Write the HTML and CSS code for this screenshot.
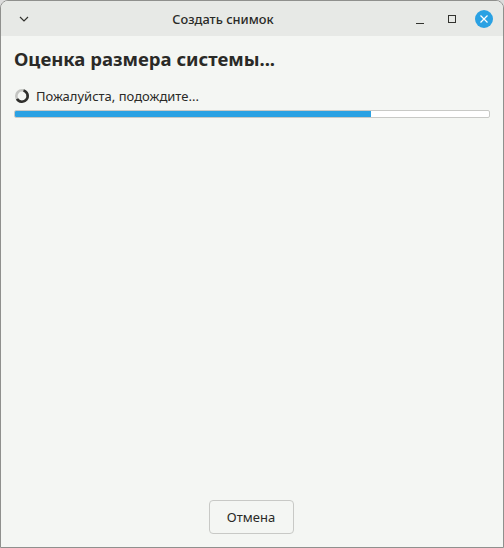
FILE: index.html
```html
<!DOCTYPE html>
<html lang="ru">
<head>
    <meta charset="UTF-8">
    <title>Создать снимок</title>
    <link rel="stylesheet" href="styles.css">
</head>
<body>
    <div class="window">
        <div class="titlebar">
            <button class="tb-btn menu-btn" type="button">
                <svg width="12" height="8" viewBox="0 0 12 8"><path d="M2 2 6 6l4-4" fill="none" stroke="#33332f" stroke-width="1.2"/></svg>
            </button>
            <div class="title">Создать снимок</div>
            <div class="win-controls">
                <button class="tb-btn" type="button">
                    <svg width="10" height="10" viewBox="0 0 10 10"><path d="M1 9.5h8" stroke="#33332f" stroke-width="1"/></svg>
                </button>
                <button class="tb-btn" type="button">
                    <svg width="10" height="10" viewBox="0 0 10 10"><rect x="1.5" y="1.5" width="7" height="7" fill="none" stroke="#33332f" stroke-width="1"/></svg>
                </button>
                <button class="tb-btn close-btn" type="button">
                    <svg width="10" height="10" viewBox="0 0 10 10"><path d="M1.5 1.5l7 7m0-7l-7 7" stroke="#fff" stroke-width="1.2"/></svg>
                </button>
            </div>
        </div>
        <div class="content">
            <h1>Оценка размера системы...</h1>
            <div class="status">
                <svg class="spinner" width="16" height="16" viewBox="0 0 16 16">
                    <circle cx="8" cy="8" r="5.7" fill="none" stroke="#c4c5c2" stroke-width="2.6"/>
                    <path d="M9.5 2.5A5.7 5.7 0 1 1 3 10.8" fill="none" stroke="#2f2f2c" stroke-width="2.6"/>
                </svg>
                <span>Пожалуйста, подождите...</span>
            </div>
            <div class="progress"><div class="progress-fill" style="width: 75.2%"></div></div>
            <div class="actions">
                <button class="cancel-btn" type="button">Отмена</button>
            </div>
        </div>
    </div>
</body>
</html>
```

FILE: styles.css
```css
html, body {
    height: 100%;
}

body {
    margin: 0;
    font-family: "Noto Sans", "Open Sans", sans-serif;
    color: #2a2a27;
    background-color: #dcdcdc;
}

.window {
    box-sizing: border-box;
    height: 548px;
    display: flex;
    flex-direction: column;
    background-color: #f4f6f3;
    border: 1px solid #8f908d;
    border-radius: 8px 8px 0 0;
    overflow: hidden;
}

.titlebar {
    height: 35px;
    flex: none;
    display: flex;
    align-items: center;
    background-color: #e7e9e6;
}

.title {
    flex: 1;
    padding-left: 2px;
    text-align: center;
    font-size: 12.8px;
    font-weight: 500;
}

.tb-btn {
    width: 32px;
    height: 24px;
    padding: 0;
    border: none;
    background: none;
    display: flex;
    align-items: center;
    justify-content: center;
    position: relative;
}

.menu-btn {
    margin-left: 7px;
}

.win-controls {
    margin-right: 3px;
    display: flex;
    align-items: center;
}

.close-btn::before {
    content: "";
    position: absolute;
    left: 7px;
    top: 3px;
    width: 18px;
    height: 18px;
    border-radius: 50%;
    background-color: #2aa1e3;
}

.close-btn svg {
    position: relative;
}

.content {
    flex: 1;
    display: flex;
    flex-direction: column;
    padding: 9px 13px 13px;
}

h1 {
    margin: 0;
    font-size: 18.5px;
    line-height: 28px;
    font-weight: 700;
}

.status {
    margin-top: 15px;
    display: flex;
    align-items: center;
    gap: 6px;
    font-size: 13px;
    line-height: 16px;
}

.progress {
    margin-top: 6px;
    height: 8px;
    box-sizing: border-box;
    background-color: #fff;
    border: 1px solid #c8c9c6;
    border-radius: 2px;
    overflow: hidden;
}

.progress-fill {
    height: 100%;
    background-color: #2aa1e3;
}

.actions {
    margin-top: auto;
    padding-right: 2px;
    display: flex;
    justify-content: center;
}

.cancel-btn {
    width: 85px;
    height: 34px;
    font-family: inherit;
    font-size: 13px;
    color: #2a2a27;
    background-color: #f4f6f3;
    border: 1px solid #c8c9c6;
    border-radius: 4px;
}
```
